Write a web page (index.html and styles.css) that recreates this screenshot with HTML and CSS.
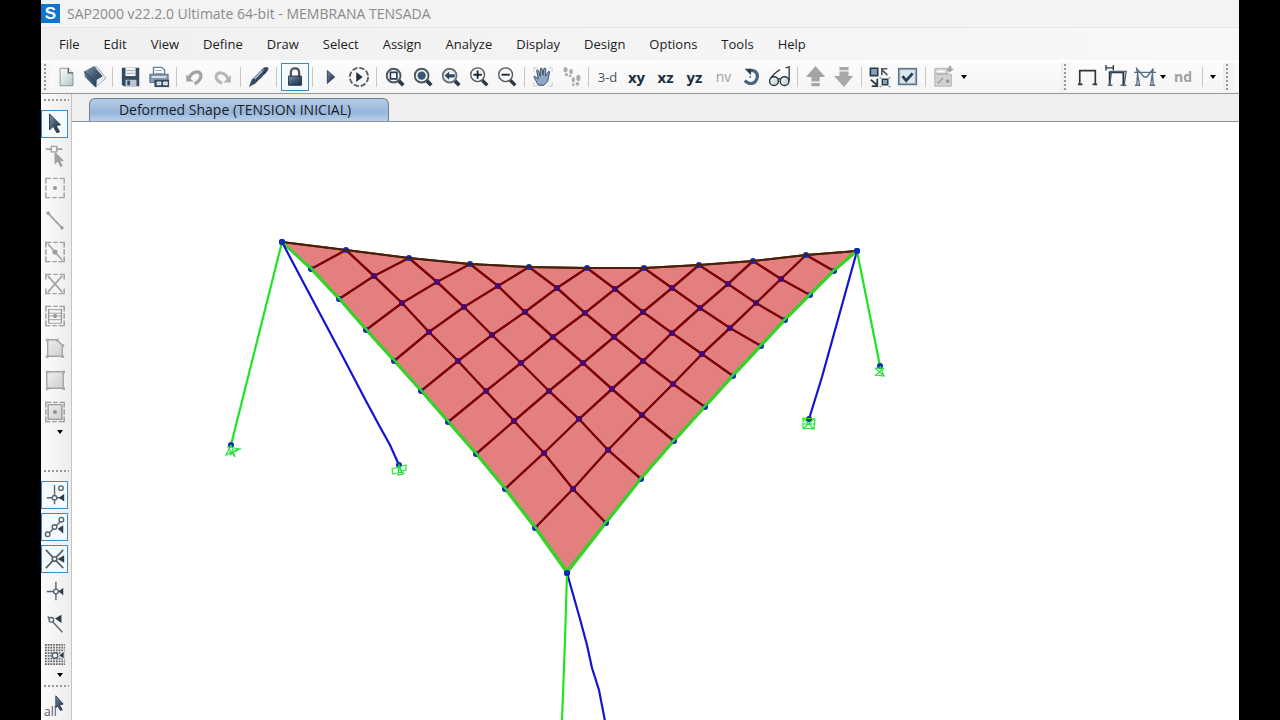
FILE: index.html
```html
<!DOCTYPE html>
<html lang="en">
<head>
<meta charset="utf-8">
<title>SAP2000 v22.2.0 Ultimate 64-bit - MEMBRANA TENSADA</title>
<link rel="stylesheet" href="styles.css">
</head>
<body>
<div class="app">
  <header class="titlebar">
    <span class="logo" aria-hidden="true">S</span>
    <span>SAP2000 v22.2.0 Ultimate 64-bit - MEMBRANA TENSADA</span>
  </header>

  <nav class="menubar">
    <button>File</button><button>Edit</button><button>View</button><button>Define</button><button>Draw</button><button>Select</button><button>Assign</button><button>Analyze</button><button>Display</button><button>Design</button><button>Options</button><button>Tools</button><button>Help</button>
  </nav>

  <div class="toolbar">
    <span class="grip"></span>
    <button class="tool" aria-label="New"><svg viewBox="0 0 24 24"><path d="M4.500 2.500h9l5 5v14h-14z" fill="url(#paper)" stroke="#818f95"/><path d="M13.500 2.500v5h5" fill="#fff" stroke="#4c5960" stroke-width="1.500"/></svg></button>
    <button class="tool" aria-label="Open"><svg viewBox="0 0 24 24"><path d="M11 1L14 1L24 13L13 23z" fill="#f4f6f7" stroke="#8997a4"/><path d="M0 6L11 0L22 13L12 23L1 12z" fill="url(#steel)"/><path d="M14 15L22 10L23 13L13 23z" fill="#e6ebee"/><path d="M0 6L13 18v5" fill="none" stroke="#263b54"/></svg></button>
    <span class="sep"></span>
    <button class="tool" aria-label="Save"><svg viewBox="0 0 24 24"><path d="M2 2h19v20H4l-2-2z" fill="#344a60"/><path d="M6 2h11v9H6z" fill="#f3f5f6"/><path d="M7 5h9M7 8h9" stroke="#9aa5ad"/><path d="M6 15h12v7H6z" fill="#b9c5cf"/><path d="M8 16h3v5H8z" fill="#344a60"/></svg></button>
    <button class="tool" aria-label="Print"><svg viewBox="0 0 24 24"><path d="M6 9V1.500h9l3 3V9" fill="#fff" stroke="#697f94" stroke-width="1.500"/><path d="M8 5h7M8 8h8" stroke="#8da1b4"/><path d="M2 9h20v9H2z" fill="#859aae" stroke="#52697f"/><path d="M4 12h16" stroke="#dce3e8" stroke-width="2"/><path d="M7 15h16v8H7z" fill="#344b64"/><path d="M10 17.500h4v3h-4zM17 17.500h4v3h-4z" fill="#b8c8d6" stroke="#fff"/></svg></button>
    <span class="sep"></span>
    <button class="tool" aria-label="Undo"><svg viewBox="0 0 24 24"><path d="M2.500 9v8h8z" fill="#a2a2a2"/><path d="M5.500 13C9 6 17 4 18.500 10C19 14 16 17 11.500 19.500" fill="none" stroke="#a2a2a2" stroke-width="3.400"/></svg></button>
    <button class="tool" aria-label="Redo"><svg viewBox="0 0 24 24"><path d="M20.500 10v8h-8z" fill="#b0b0b0"/><path d="M17.500 14C14 6 6 6 4.500 11C4 15 7 17 11 19" fill="none" stroke="#b8b8b8" stroke-width="3.400"/></svg></button>
    <span class="sep"></span>
    <button class="tool" aria-label="Refresh window"><svg viewBox="0 0 24 24"><path d="M1 23l3-8L17 2q4-2 5 0q1 2-2 5L8 19z" fill="#344a61"/><path d="M7 14L17 4" stroke="#a7bbcd" stroke-width="2"/><path d="M15 4l4 4" stroke="#17222f"/></svg></button>
    <span class="sep"></span>
    <button class="tool active" aria-label="Unlock model" aria-pressed="true"><svg viewBox="0 0 24 24"><path d="M7.500 12V7q0-4.500 4.500-4.500T16.500 7v5" fill="none" stroke="#4d5357" stroke-width="2.400"/><path d="M5 11h14v10H5z" fill="url(#steel)" stroke="#182b3f"/></svg></button>
    <span class="sep"></span>
    <button class="tool" aria-label="Run analysis"><svg viewBox="0 0 24 24"><path d="M8 5l8 7-8 7z" fill="url(#steel)" stroke="#2b4158"/></svg></button>
    <button class="tool" aria-label="Run all"><svg viewBox="0 0 24 24"><circle cx="12" cy="12" r="10" fill="none" stroke="#565f66" stroke-width="2" stroke-dasharray="5.850 2"/><path d="M9 6.500l7 5.500-7 5.500z" fill="#1d2f40"/></svg></button>
    <span class="sep"></span>
    <button class="tool" aria-label="Rubber band zoom"><svg viewBox="0 0 24 24"><path d="M16 16l5 5" stroke="#293746" stroke-width="4"/><circle cx="10.500" cy="10.500" r="7.500" fill="#edf1f2" stroke="#4f565b" stroke-width="2"/><path d="M7 7h7v7H7z" fill="#fff" stroke="#293d52" stroke-width="1.800"/></svg></button>
    <button class="tool" aria-label="Restore full view"><svg viewBox="0 0 24 24"><path d="M16 16l5 5" stroke="#293746" stroke-width="4"/><circle cx="10.500" cy="10.500" r="7.500" fill="#edf1f2" stroke="#4f565b" stroke-width="2"/><circle cx="10.500" cy="10.500" r="4.500" fill="#3b566f"/></svg></button>
    <button class="tool" aria-label="Previous zoom"><svg viewBox="0 0 24 24"><path d="M16 16l5 5" stroke="#293746" stroke-width="4"/><circle cx="10.500" cy="10.500" r="7.500" fill="#edf1f2" stroke="#6b7378" stroke-width="2"/><path d="M5 10.500L10 6v3h6v3.500h-6V15z" fill="#304961"/></svg></button>
    <button class="tool" aria-label="Zoom in"><svg viewBox="0 0 24 24"><path d="M15.500 15.500l5.500 5.500" stroke="#293746" stroke-width="3.600"/><circle cx="10.500" cy="9.500" r="7.500" fill="#f6f8f8" stroke="#555c61" stroke-width="1.500"/><path d="M6 9.500h9M10.500 5v9" stroke="#172737" stroke-width="2"/></svg></button>
    <button class="tool" aria-label="Zoom out"><svg viewBox="0 0 24 24"><path d="M15.500 15.500l5.500 5.500" stroke="#293746" stroke-width="3.600"/><circle cx="10.500" cy="9.500" r="7.500" fill="#f6f8f8" stroke="#555c61" stroke-width="1.500"/><path d="M6 9.500h9" stroke="#172737" stroke-width="2"/></svg></button>
    <span class="sep"></span>
    <button class="tool" aria-label="Pan"><svg viewBox="0 0 24 24"><path d="M2 6V2h4M18 2h4v4M22 18v4h-4M6 22H2v-4" fill="none" stroke="#c3c7ca"/><path d="M7 21L2 12l1-1 4 3-2-9q1-2 2 0l2 6V3q1-2 2 0l1 7 1-7q1-2 2 0v8l3-5q2-1 1 2l-2 9-4 4z" fill="#8ba6c6" stroke="#34475b"/></svg></button>
    <button class="tool" aria-label="Walk"><svg viewBox="0 0 24 24" fill="#acacac"><ellipse cx="6" cy="4" rx="2.200" ry="3"/><circle cx="7" cy="9.500" r="1.800"/><ellipse cx="12" cy="6" rx="2" ry="3"/><circle cx="11" cy="11" r="1.500"/><ellipse cx="20" cy="13" rx="2.200" ry="3.500"/><circle cx="19" cy="19.500" r="2"/><ellipse cx="14.500" cy="15" rx="1.800" ry="3"/><circle cx="14.500" cy="20.500" r="1.500"/></svg></button>
    <span class="sep"></span>
    <button class="tool text">3-d</button>
    <button class="tool text strong">xy</button>
    <button class="tool text strong">xz</button>
    <button class="tool text strong">yz</button>
    <button class="tool text dim">nv</button>
    <button class="tool" aria-label="Rotate 3D view"><svg viewBox="0 0 24 24"><path d="M9 5Q17 4 18 11Q17 20 9 19Q6 18 4 16" fill="none" stroke="#49647d" stroke-width="3.500"/><path d="M4 3h7v7z" fill="#263e56"/><circle cx="10" cy="12" r="1" fill="#49647d"/></svg></button>
    <button class="tool" aria-label="Perspective toggle"><svg viewBox="0 0 24 24"><path d="M1 15Q4 9 12 4M22 16V1l-4 1" fill="none" stroke="#34414d" stroke-width="1.500"/><circle cx="5.500" cy="16.500" r="4.800" fill="url(#paper)" stroke="#26333e" stroke-width="1.500"/><circle cx="17" cy="16.500" r="4.800" fill="url(#paper)" stroke="#26333e" stroke-width="1.500"/><path d="M10 14h3" stroke="#26333e" stroke-width="1.500"/></svg></button>
    <span class="sep"></span>
    <button class="tool" aria-label="Move up in list"><svg viewBox="0 0 24 24" fill="#a4a4a4"><path d="M11.500 0L22 12h-6v5H7v-5H1zM7 18.500h9V22H7z"/></svg></button>
    <button class="tool" aria-label="Move down in list"><svg viewBox="0 0 24 24" fill="#a8a8a8"><path d="M7 1h10v3.500H7zM7 6h10v5h5L12 23 1 11h6z"/></svg></button>
    <span class="sep"></span>
    <button class="tool" aria-label="Object shrink toggle"><svg viewBox="0 0 24 24"><path d="M1.500 2.500h8v8h-8z" fill="#8aa2b9" stroke="#283d52" stroke-width="1.800"/><path d="M13 3h7M14 3v7M14 4l6 6" stroke="#4b5863" stroke-width="1.800"/><path d="M2 15l7 6M9 14v8H3" fill="none" stroke="#303e4a" stroke-width="2"/><path d="M14.500 14.500h6v6h-6z" fill="#8aa2b9" stroke="#283d52" stroke-width="1.600"/><path d="M11.500 13h2M21.500 13h2M11.500 22.500h2M21.500 22.500h2" stroke="#456"/></svg></button>
    <button class="tool" aria-label="Set display options"><svg viewBox="0 0 24 24"><path d="M1 2h21v19H1z" fill="#607589"/><path d="M3 4h17v15H3z" fill="#dce8f1" stroke="#9babb8"/><path d="M6 11l4 5 7-8" fill="none" stroke="#293e56" stroke-width="3"/></svg></button>
    <span class="sep"></span>
    <button class="tool" aria-label="Assign group"><svg viewBox="0 0 24 24"><path d="M2 2.500h14v6H2zM2 9h18v13H2z" fill="#d2d2d2" stroke="#b0b0b0"/><path d="M4 6h9" stroke="#fff" stroke-width="2"/><path d="M5 19L11 13" stroke="#999" stroke-width="1.500"/><path d="M17 0h3v3h3l-5 4-4-4h3z" fill="#a2a2a2"/><circle cx="16" cy="16.500" r="2" fill="#999"/></svg></button>
    <button class="caret" aria-label="More assign options"></button>

    <div class="section-tools">
      <span class="grip"></span>
      <button class="tool wide" aria-label="Frame section"><svg viewBox="0 0 24 24"><path d="M3 19V5h17v14M1 20h5M17 20h5" fill="none" stroke="#2d363d" stroke-width="1.800"/></svg></button>
      <button class="tool wide" aria-label="Frame releases"><svg viewBox="0 0 24 24"><path d="M0 -1v6M8 -1v6M0 2H8" stroke="#303b44" stroke-width="1.500" fill="none"/><path d="M4 21V7h15v14" fill="none" stroke="#1f303e" stroke-width="2"/><path d="M2 21h5M16 21h6M4 21L6 7M20 20l2-14H4" fill="none" stroke="#4b6479" stroke-width="1.400"/></svg></button>
      <button class="tool" aria-label="Frame forces"><svg viewBox="0 0 24 24"><path d="M0 7h24M1 21h6M17 21h6M3 21L4 7M6 21L3 3l8 9h3l7-9-3 18M21 21L20 7" fill="none" stroke="#587087" stroke-width="1.500"/></svg></button>
      <button class="caret narrow" aria-label="More force displays"></button>
      <button class="tool name dim">nd</button>
      <span class="sep"></span>
      <button class="caret" aria-label="More named displays"></button>
      <span class="grip end"></span>
    </div>
  </div>

  <main class="workspace">
    <aside class="sidebar">
      <span class="hgrip"></span>
      <div class="tools">
        <button class="side active" aria-label="Pointer" aria-pressed="true"><svg viewBox="0 0 24 24"><path d="M6 1l12 12-5 .500 4 7-3 1-4-7-4 4z" fill="url(#steel)" stroke="#2a333c"/></svg></button>
        <button class="side" aria-label="Reshape"><svg viewBox="0 0 24 24" fill="none" stroke="#a0a0a0"><path d="M2 4.500h6M14 4.500h6" stroke-width="2"/><path d="M8 1.500h6v6H8z" stroke-width="1.500"/><path d="M12 8l9 9-4 .500 3 5-2 1-3-6-3 3z" fill="#a0a0a0"/></svg></button>
        <button class="side" aria-label="Draw joint"><svg viewBox="0 0 24 24" fill="none" stroke="#a2a2a2" stroke-width="1.500"><path d="M2 7V1.500h6M10 1.500h5M17 1.500h5V7M22 9v6M22 17v5.500h-6M14 22.500H9M7 22.500H2V17M2 15V9"/><circle cx="12" cy="12" r="2.200" fill="#999" stroke="none"/></svg></button>
        <button class="side" aria-label="Draw frame"><svg viewBox="0 0 24 24" stroke="#a0a0a0" fill="#a0a0a0"><path d="M5 5l14 15" stroke-width="1.800"/><circle cx="4.500" cy="4.500" r="1.500"/><circle cx="19.500" cy="20.500" r="1.500"/></svg></button>
        <button class="side" aria-label="Quick draw frame"><svg viewBox="0 0 24 24" fill="none" stroke="#9f9f9f" stroke-width="1.600"><path d="M2 7V1.500h6M10 1.500h5M17 1.500h5V7M22 9v6M22 17v5.500h-6M14 22.500H9M7 22.500H2V17M2 15V9M4 3l16 18"/><circle cx="12" cy="12" r="2" fill="#999"/></svg></button>
        <button class="side" aria-label="Quick draw braces"><svg viewBox="0 0 24 24" fill="none" stroke="#a2a2a2" stroke-width="1.600"><path d="M2 7V1.500h6M10 1.500h5M17 1.500h5V7M22 17v5.500h-6M14 22.500H9M7 22.500H2V17"/><path d="M4 3l16 18M20 3L4 21" stroke-width="2"/></svg></button>
        <button class="side" aria-label="Quick draw secondary beams"><svg viewBox="0 0 24 24" fill="none" stroke="#9c9c9c" stroke-width="1.500"><path d="M2 7V1.500h6M10 1.500h5M17 1.500h5V7M22 9v6M22 17v5.500h-6M14 22.500H9M7 22.500H2V17M2 15V9"/><path d="M5 4v16M19 4v16"/><path d="M5 5h14M5 9h14M5 12h14M5 16h14M5 20h14" stroke-width="1"/><circle cx="12" cy="12" r="1.500" fill="#999"/></svg></button>
        <button class="side" aria-label="Draw poly area"><svg viewBox="0 0 24 24"><path d="M4 3h10l6 6v12H4z" fill="url(#gray)" stroke="#a3a3a3" stroke-width="1.500"/><path d="M2 2h3v3H2zM13 2h3v3h-3zM19 8h3v3h-3zM19 20h3v3h-3zM2 20h3v3H2z" fill="#aaa"/></svg></button>
        <button class="side" aria-label="Draw rectangular area"><svg viewBox="0 0 24 24"><path d="M3 3h18v18H3z" fill="url(#gray)" stroke="#a3a3a3" stroke-width="1.500"/><path d="M2 2h3v3H2zM20 2h3v3h-3zM20 20h3v3h-3zM2 20h3v3H2z" fill="#aaa"/></svg></button>
        <button class="side" aria-label="Quick draw area"><svg viewBox="0 0 24 24" fill="none" stroke="#999" stroke-width="1.500"><path d="M2 7V1.500h6M10 1.500h5M17 1.500h5V7M22 9v6M22 17v5.500h-6M14 22.500H9M7 22.500H2V17M2 15V9"/><path d="M4.500 4h15v16h-15z" fill="url(#gray)"/><circle cx="12" cy="12" r="1.500" fill="#888"/></svg></button>
      </div>
      <button class="caret down" aria-label="More draw tools"></button>
      <span class="hgrip middle"></span>
      <div class="tools">
        <button class="side active" aria-label="Snap to points" aria-pressed="true"><svg viewBox="0 0 24 24" fill="none" stroke="#59636c" stroke-width="1.500"><path d="M11.500 1v21M3 15h15"/><circle cx="11.500" cy="15" r="2.500" fill="#fff"/><circle cx="18.500" cy="4.500" r="2.500"/><path d="M16 15l6-4v8z" fill="#2b3c4b" stroke="none"/></svg></button>
        <button class="side active" aria-label="Snap to line ends" aria-pressed="true"><svg viewBox="0 0 24 24" fill="none" stroke="#52616f" stroke-width="1.500"><path d="M5 19L19 5"/><g fill="#fff"><circle cx="4" cy="20" r="2.500"/><circle cx="11.500" cy="12" r="2.500"/><circle cx="19" cy="4" r="2.500"/></g><path d="M15 14l6-4v9z" fill="#2b3c4b" stroke="none"/></svg></button>
        <button class="side active" aria-label="Snap to intersections" aria-pressed="true"><svg viewBox="0 0 24 24" fill="none" stroke="#535f69" stroke-width="1.800"><path d="M2 2l19 20M21 2L2 22"/><circle cx="11.500" cy="12" r="2.500" fill="#fff"/><path d="M15 12l7-4v8z" fill="#2b3c4b" stroke="none"/></svg></button>
        <button class="side" aria-label="Snap perpendicular"><svg viewBox="0 0 24 24" fill="none" stroke="#59646c" stroke-width="1.500"><path d="M13 2v20M3 12.500h17"/><circle cx="13" cy="12.500" r="2.500" fill="#fff"/><path d="M16 12.500l5-4v8z" fill="#2b3c4b" stroke="none"/></svg></button>
        <button class="side" aria-label="Snap to lines and edges"><svg viewBox="0 0 24 24" fill="none" stroke="#59646c" stroke-width="1.500"><path d="M4 5l4 4 12 13"/><circle cx="8" cy="8.500" r="2.500" fill="#fff"/><path d="M12 7l7-4v9z" fill="#2b3c4b" stroke="none"/></svg></button>
        <button class="side" aria-label="Snap to fine grid"><svg viewBox="0 0 24 24" fill="none" stroke="#666"><path d="M1 1h22M1 4h22M1 7h22M1 10h22M1 13h22M1 16h22M1 19h22M1 22h22" stroke-width="1.800" stroke-dasharray="2 1"/><circle cx="12" cy="12.500" r="3" fill="#fff" stroke="#53616c" stroke-width="1.500"/><path d="M16 12.500l6-5v9z" fill="#26394a" stroke="#fff"/></svg></button>
      </div>
      <button class="caret down" aria-label="More snap tools"></button>
      <span class="hgrip lower"></span>
      <button class="side all" aria-label="Select all"><span>all</span><svg viewBox="0 0 24 24"><path d="M14 2l8 9-4 1 3 5-2 1-3-5-2 2z" fill="url(#steel)" stroke="#33414d"/></svg></button>
    </aside>

    <section class="view">
      <div class="tabs" role="tablist"><button class="tab" role="tab" aria-selected="true">Deformed Shape (TENSION INICIAL)</button></div>
      <svg class="model" viewBox="72 122 1167 598" preserveAspectRatio="xMinYMin slice" role="img" aria-label="Deformed shape of the tensioned membrane">
        <path class="membrane" d="M282 242L346 250L409 258L470 264L529 267L587 268L644 268L699 265L753 261L806 255L857 250L834 271L810 295L785 320L761 346L733 376L705 407L674 441L641 479L606 523L567 574L535 528L505 489L476 454L448 422L421 391L394 361L366 330L339 299L311 269z"/>
        <g class="threads">
          <path d="M311 269L346 250"/>
          <path d="M339 299L374 276L409 258"/>
          <path d="M366 330L402 303L437 282L470 264"/>
          <path d="M394 361L429 332L464 307L498 286L529 267"/>
          <path d="M421 391L458 361L492 335L525 312L557 288L587 268"/>
          <path d="M448 422L486 391L521 363L553 337L585 313L615 289L644 268"/>
          <path d="M476 454L514 421L549 391L583 363L614 337L643 312L672 288L699 265"/>
          <path d="M505 489L544 453L579 419L612 389L643 361L672 333L700 308L728 284L753 261"/>
          <path d="M535 528L573 489L608 450L642 415L673 384L702 354L730 328L756 303L781 279L806 255"/>
        </g>
        <g class="threads knots">
          <path d="M346 250L374 276L402 303L429 332L458 361L486 391L514 421L544 453L573 489L606 523"/>
          <path d="M409 258L437 282L464 307L492 335L521 363L549 391L579 419L608 450L641 479"/>
          <path d="M470 264L498 286L525 312L553 337L583 363L612 389L642 415L674 441"/>
          <path d="M529 267L557 288L585 313L614 337L643 361L673 384L705 407"/>
          <path d="M587 268L615 289L643 312L672 333L702 354L733 376"/>
          <path d="M644 268L672 288L700 308L730 328L761 346"/>
          <path d="M699 265L728 284L756 303L785 320"/>
          <path d="M753 261L781 279L810 295"/>
          <path d="M806 255L834 271"/>
        </g>
        <path class="rim joints" d="M282 242L346 250L409 258L470 264L529 267L587 268L644 268L699 265L753 261L806 255L857 251"/>
        <path class="rim" d="M282 242L346 250L409 258L470 264L529 267L587 268L644 268L699 265L753 261L806 255L857 251"/>
        <g class="cable joints">
          <path d="M282 242L311 269L339 299L366 330L394 361L421 391L448 422L476 454L505 489L535 528L567 573"/>
          <path d="M857 251L834 271L810 295L785 320L761 346L733 376L705 407L674 441L641 479L606 523L567 573"/>
        </g>
        <g class="cable">
          <path d="M284 244L312 269L340 299L367 330L395 361L422 391L449 422L477 454L506 489L536 528L567 571"/>
          <path d="M855 252L833 271L809 295L784 320L760 346L732 376L704 407L673 441L640 479L605 523L567 571"/>
        </g>
        <path class="post" d="M282 242L301 278L343 357L366 401L380 427L390 445L399 465M857 251L832 341L822 377L809 419M567 573L580 619L587 645L592 668L599 690L605 721"/>
        <path class="stay" d="M282 242L231 445M857 251L880 366M567 573L565 640L562 721"/>
        <g class="dots"><circle cx="231" cy="445" r="3"/><circle cx="399" cy="465" r="3"/><circle cx="809" cy="419" r="3"/><circle cx="880" cy="366" r="3"/><circle cx="282" cy="242" r="3"/><circle cx="857" cy="251" r="3"/><circle cx="567" cy="573" r="3"/></g>
        <g class="supports">
          <path d="M231 445L226 455L240 449L228 447L235 457L231 445M229 452l8-1M230 455l7-6"/>
          <path d="M392 469l14-4v5l-13 4zM399 465l-1 10 5-1zM397 467l7 7"/>
          <path d="M803 418l12 1-1 10-11-1zM803 418l11 11M814 419l-11 10M804 424h10"/>
          <path d="M875 368l9 8M884 368l-9 8M875 368h9M880 366l4 10-9-1"/>
        </g>
      </svg>
    </section>
  </main>
</div>
<svg class="defs" aria-hidden="true">
  <defs>
    <linearGradient id="steel" x1="0" y1="0" x2="1" y2="1"><stop offset="0" stop-color="#8198ae"/><stop offset=".5" stop-color="#3f5870"/><stop offset="1" stop-color="#20344a"/></linearGradient>
    <linearGradient id="paper" x1="0" y1="0" x2="1" y2="1"><stop offset="0" stop-color="#fff"/><stop offset="1" stop-color="#b4c6c9"/></linearGradient>
    <linearGradient id="gray" x1="0" y1="0" x2="1" y2="1"><stop offset="0" stop-color="#efefef"/><stop offset="1" stop-color="#cecece"/></linearGradient>
    <marker id="joint" markerUnits="userSpaceOnUse" markerWidth="8" markerHeight="8" refX="4" refY="4"><circle cx="4" cy="4" r="3" fill="#102cb4"/></marker>
    <marker id="knot" markerUnits="userSpaceOnUse" markerWidth="8" markerHeight="8" refX="4" refY="4"><circle cx="4" cy="4" r="3" fill="#4a0672"/></marker>
  </defs>
</svg>
</body>
</html>
```
FILE: styles.css
```css
* { box-sizing: border-box; }
body { margin: 0; background: #000; font-family: "Open Sans", "Noto Sans", sans-serif; font-size: 13px; color: #1c1c1c; overflow: hidden; }
button { margin: 0; padding: 0; border: 0; background: none; font: inherit; color: inherit; }
svg { display: block; overflow: visible; }
.defs { position: absolute; width: 0; height: 0; }
.app { display: flex; flex-direction: column; height: 100vh; margin: 0 41px; background: #f0f0f0; }

.titlebar { display: flex; align-items: center; gap: 7px; height: 28px; flex: none; background: #f3f3f3; border-bottom: 1px solid #e6e6e6; color: #8a8a8a; font-size: 14px; }
.logo { width: 19px; height: 19px; background: #0f75cf; color: #fff; font: bold 17px/19px "Liberation Sans", sans-serif; text-align: center; }

.menubar { display: flex; align-items: center; height: 32px; flex: none; padding-left: 6px; background: linear-gradient(90deg, #f0f0f0, #f8f8f8); }
.menubar button { padding: 0 12px; }

.toolbar { display: flex; align-items: center; height: 34px; flex: none; background: linear-gradient(#fdfdfd, #f4f4f4); border-bottom: 1px solid #969696; }
.grip { width: 12px; height: 28px; flex: none; background: radial-gradient(circle, #999 0, #999 1px, transparent 1px) 2px 0 / 4px 4px repeat-y, linear-gradient(90deg, #eee, #fafafa); }
.tool { display: flex; align-items: center; justify-content: center; width: 28px; height: 28px; flex: none; }
.tool svg, .side svg { width: 22px; height: 22px; }
.tool.active, .side.active { border: 1px solid #3b8ac4; background: #f6fafd; }
.tool.wide, .tool.text { width: 29px; }
.tool.name { width: 32px; font-weight: bold; }
.tool.text { color: #45525f; }
.tool.strong { color: #1d2f40; font-weight: bold; font-size: 15px; }
.tool.dim { color: #a0a0a0; font-size: 14px; }
.sep { width: 1px; height: 20px; margin: 0 4px 0 3px; flex: none; background: #c6c6c6; }
.caret { display: flex; align-items: center; justify-content: center; width: 12px; height: 12px; flex: none; }
.caret::before { content: ""; border: 3px solid transparent; border-top: 4px solid #000; border-bottom: 0; }
.caret.narrow { width: 8px; }
.section-tools { display: flex; align-items: center; margin-left: auto; }
.grip.end { width: 16px; margin-left: 4px; }

.workspace { display: flex; flex: 1; min-height: 0; overflow: hidden; }
.sidebar { display: flex; flex-direction: column; align-items: flex-start; width: 31px; flex: none; background: linear-gradient(90deg, #fbfbfb, #ededed); border-right: 1px solid #c4c4c4; overflow: hidden; }
.hgrip { width: 26px; height: 4px; flex: none; margin: 4px 0 8px 2px; background: radial-gradient(circle, #999 0, #999 1px, transparent 1px) 0 0 / 4px 4px repeat-x; }
.hgrip.middle { margin: 31px 0 8px 2px; }
.hgrip.lower { margin: 3px 0 6px 2px; }
.tools { display: flex; flex-direction: column; gap: 4px; }
.side { position: relative; display: flex; align-items: center; justify-content: center; width: 27px; height: 28px; flex: none; }
.caret.down { margin-left: 13px; }
.side.all { align-items: flex-end; justify-content: flex-start; height: 25px; padding-left: 3px; color: #4c5964; font-size: 12px; line-height: 14px; }
.side.all svg { position: absolute; top: 0; left: 2px; }

.view { display: flex; flex-direction: column; flex: 1; min-width: 0; background: #fff; }
.tabs { display: flex; align-items: flex-end; height: 28px; flex: none; padding-left: 17px; background: #efefef; border-bottom: 1px solid #8a929b; }
.tab { width: 300px; height: 23px; padding-right: 8px; border: 1px solid #71808f; border-bottom: 0; border-radius: 6px 6px 0 0; background: linear-gradient(#b4cce6, #97b6dc 60%, #b8d0ea); font-size: 14px; line-height: 20px; white-space: nowrap; }
.model { width: 100%; flex: 1; min-height: 0; overflow: hidden; background: #fff; }
.membrane { fill: #e37f7f; }
.threads path { fill: none; stroke: #790003; stroke-width: 2.4; }
.knots path { marker-mid: url(#knot); }
.rim { fill: none; stroke: #4a2108; stroke-width: 2; }
.joints, .joints path { marker-start: url(#joint); marker-mid: url(#joint); marker-end: url(#joint); }
.cable path { fill: none; stroke: #38d129; stroke-width: 2.6; }
.post { fill: none; stroke: #1414d2; stroke-width: 2.2; }
.stay { fill: none; stroke: #1ee61e; stroke-width: 2.2; }
.dots { fill: #102cb4; }
.supports { fill: none; stroke: #22e635; stroke-width: 1.2; }
```
